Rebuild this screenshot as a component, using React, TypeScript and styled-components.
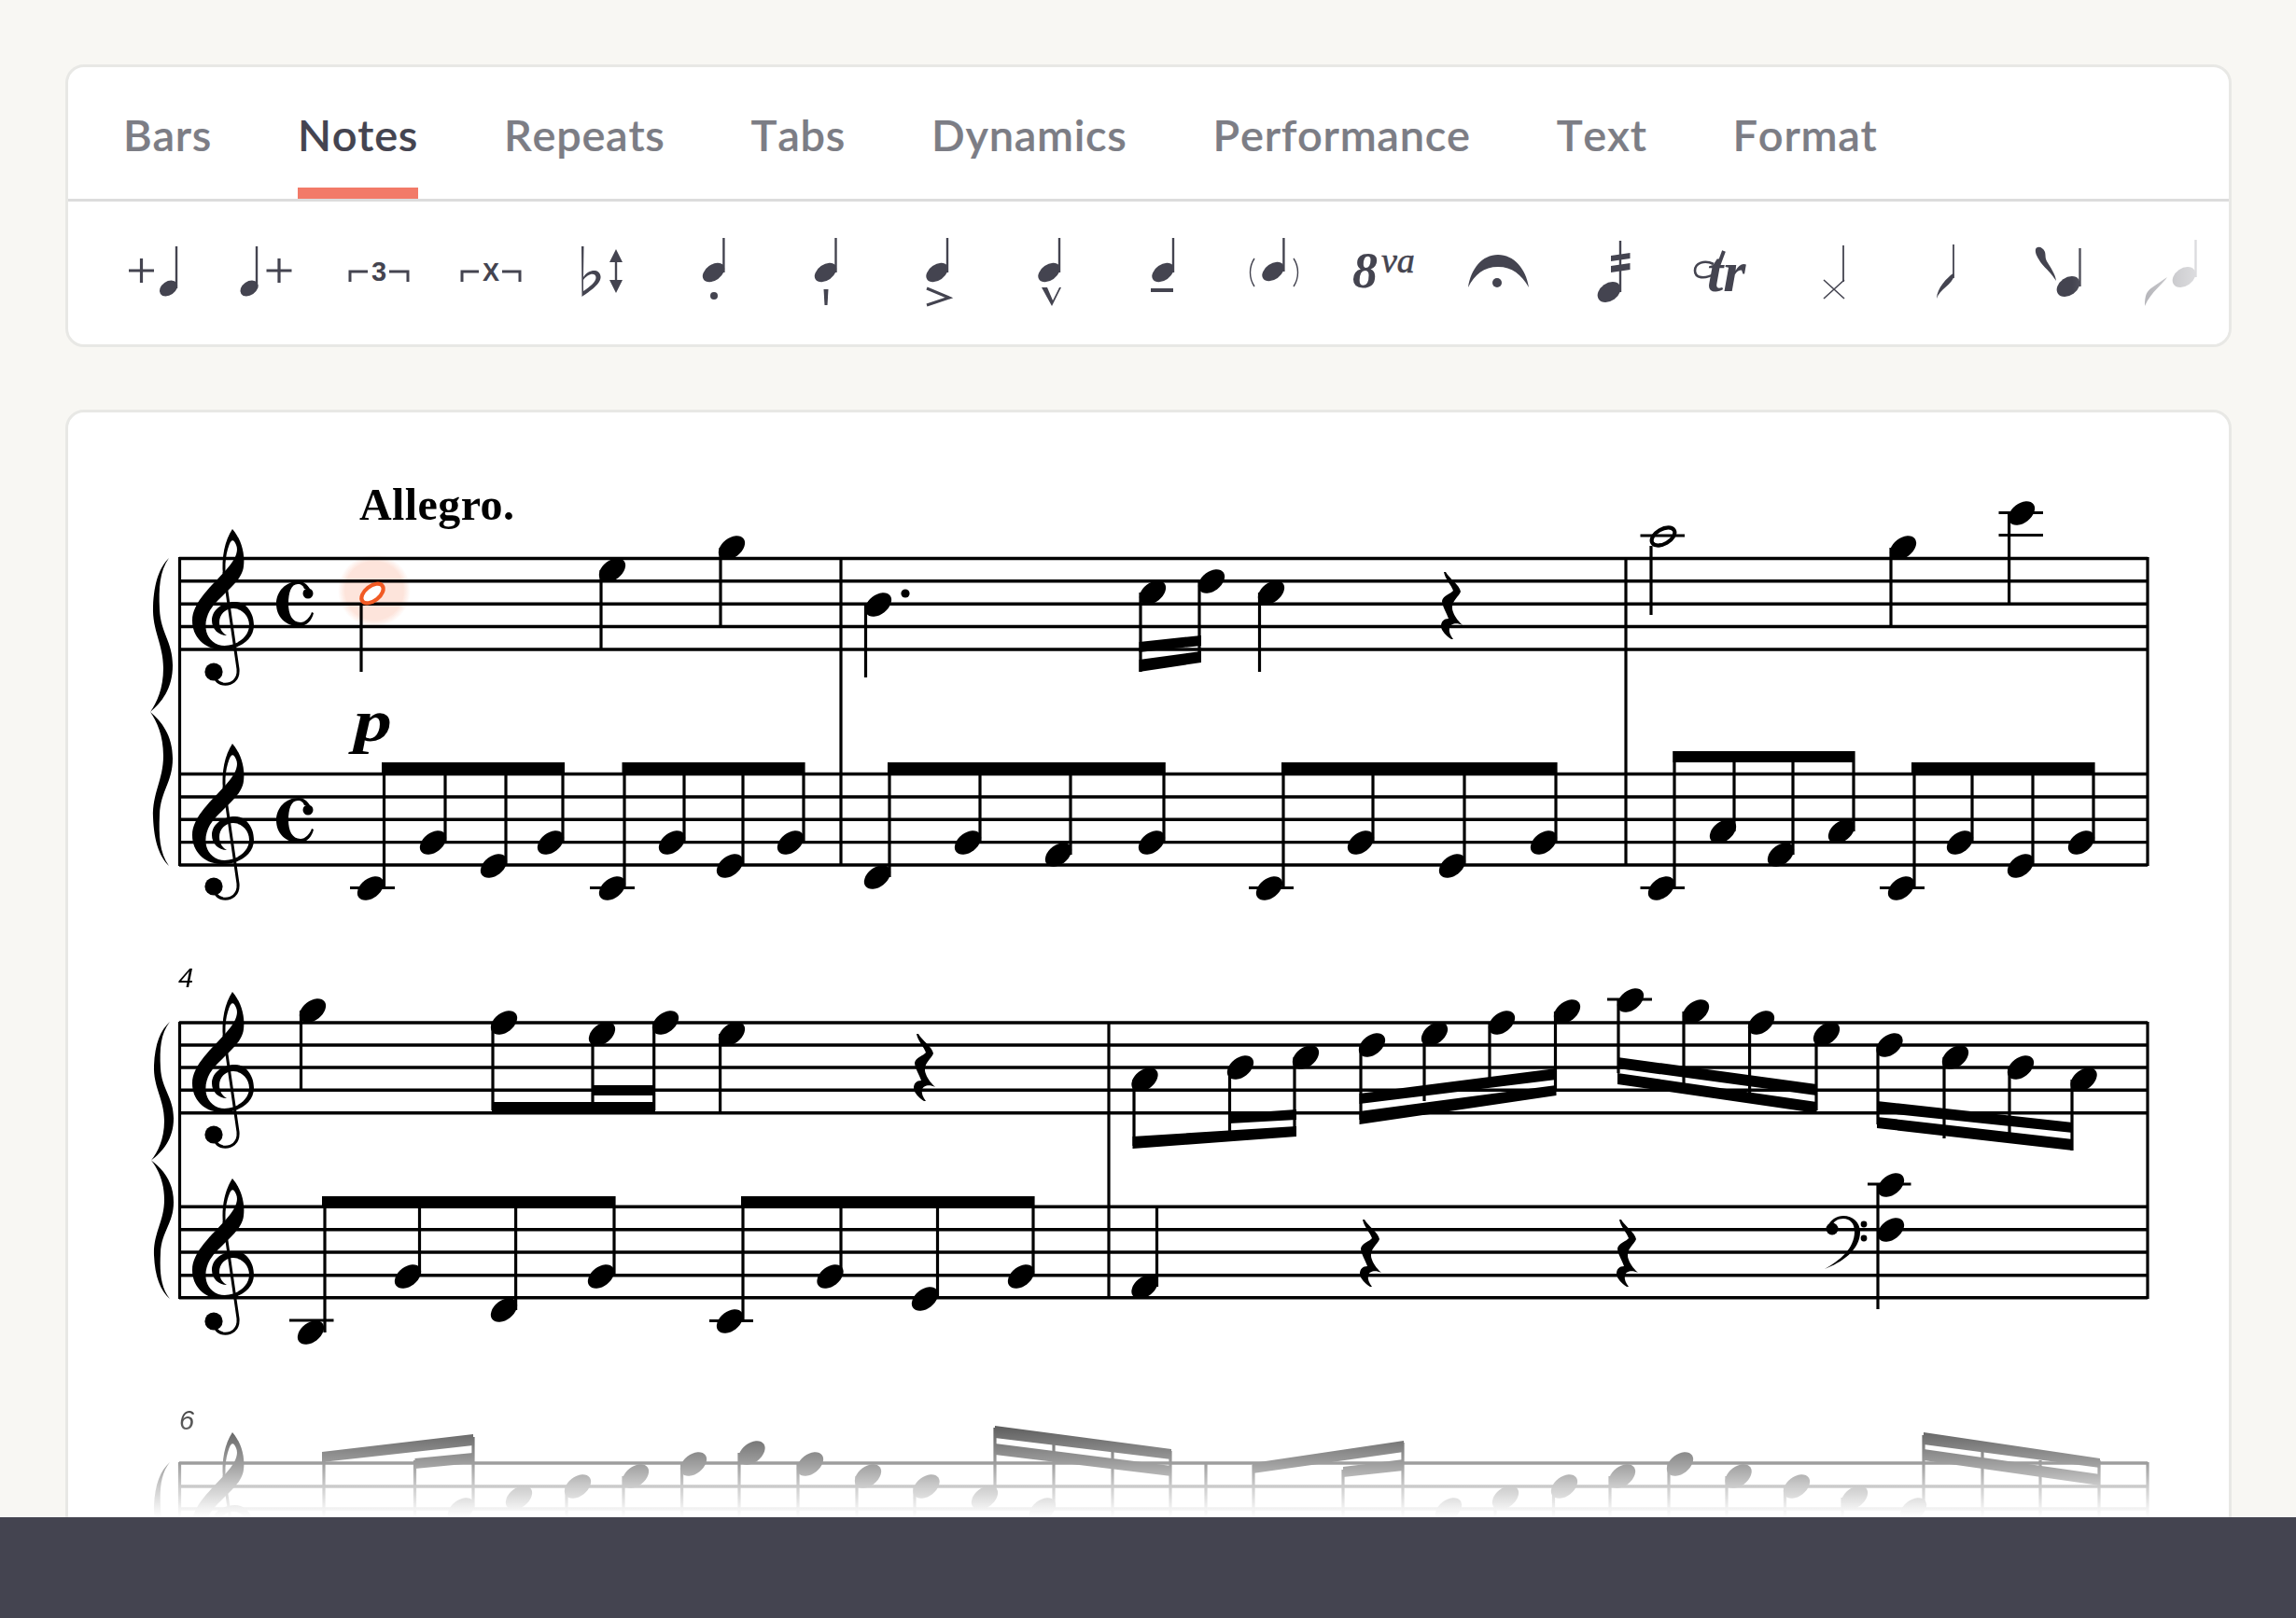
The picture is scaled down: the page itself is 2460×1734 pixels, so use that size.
import React from "react";
import styled, { createGlobalStyle } from "styled-components";

const INK = "#444450";

const GlobalStyle = createGlobalStyle`
  html, body { margin: 0; padding: 0; background: #f8f7f3; }
  body { font-family: "Lato", "Liberation Sans", sans-serif; }
`;

const Page = styled.div`
  width: 2460px;
  height: 1734px;
  display: flex;
  flex-direction: column;
  overflow: hidden;
  background: #f8f7f3;
`;

const Main = styled.main`
  flex: 1;
  min-height: 0;
  padding: 69px 69px 0 70px;
  display: flex;
  flex-direction: column;
  gap: 67px;
  overflow: hidden;
`;

const Card = styled.section`
  background: #fff;
  border: 3px solid #e8e8e5;
  border-radius: 20px;
  flex: none;
`;

const TabBar = styled.nav`
  height: 141px;
  display: flex;
  gap: 92px;
  padding-left: 59px;
  border-bottom: 3px solid #dcdcdc;
`;

const Tab = styled.div<{ $active?: boolean }>`
  position: relative;
  font-size: 47px;
  font-weight: 600;
  line-height: 145px;
  letter-spacing: 0.7px;
  font-kerning: none;
  -webkit-text-stroke: 0.2px currentColor;
  color: ${(p) => (p.$active ? INK : "#7c7d85")};
  &::after {
    content: "";
    display: ${(p) => (p.$active ? "block" : "none")};
    position: absolute;
    left: 0;
    right: 0;
    bottom: 0;
    height: 12px;
    background: #f27a68;
  }
`;

const ToolBar = styled.div`
  position: relative;
  height: 153px;
  display: flex;
  padding-left: 32px;
  overflow: hidden;
  border-radius: 0 0 18px 18px;
`;

const ToolIcon = styled.svg`
  flex: none;
  width: 120px;
  height: 153px;
  display: block;
`;

const ToolFade = styled.div`
  position: absolute;
  top: 0;
  right: 0;
  bottom: 0;
  width: 168px;
  background: linear-gradient(
    to right,
    rgba(255, 255, 255, 0) 0%,
    rgba(255, 255, 255, 0.6) 45%,
    rgba(255, 255, 255, 0.95) 100%
  );
`;

const ScoreCard = styled(Card)`
  position: relative;
  flex: 1;
  min-height: 0;
  margin-bottom: -40px;
  overflow: hidden;
`;

const ScoreSheet = styled.svg`
  display: block;
  width: 2315px;
  height: 1184px;
  filter: blur(0.45px);
`;

const ScoreFade = styled.div`
  position: absolute;
  left: 0;
  right: 0;
  bottom: 37px;
  height: 156px;
  background: linear-gradient(
    to bottom,
    rgba(255, 255, 255, 0) 0%,
    rgba(255, 255, 255, 0.62) 63%,
    rgba(255, 255, 255, 0.8) 79%,
    rgba(255, 255, 255, 0.95) 94%,
    rgba(255, 255, 255, 1) 100%
  );
`;

const Footer = styled.footer`
  flex: none;
  position: relative;
  height: 108px;
  background: ${INK};
`;

/* ---------- engraving shapes ---------- */

const SERIF = '"Liberation Serif", serif';
const SANS = '"Liberation Sans", sans-serif';

type Pt = [number, number];
type StemLine = [number, number, number];
type BeamQuad = [number, number, number, number, number, number];
type Ledger = [number, number, number];

const Head = ({ x, y }: { x: number; y: number }) => (
  <ellipse cx={x} cy={y} rx={16} ry={10.4} transform={`rotate(-38 ${x} ${y})`} />
);

const Clef = ({ x, y }: { x: number; y: number }) => (
  <g transform={`translate(${x} ${y})`}>
    <path d="M43 0C51 9 57 24 55 40C53 58 30 70 19 87C11 101 13 118 28 124C42 128 61 118 61 103C61 92 52 85 44 85C35 85 29 92 29 100C29 107 33 112 37 114C28 114 21 107 21 98C21 86 33 78 46 78C58 78 66 90 66 103C66 120 48 130 30 129C12 128 0 115 0 98C0 78 22 60 36 44C46 33 50 24 47 17C45 12 43 11 41 14Z" />
    <path d="M43 0C35 12 31 30 33 50L36 50C34 32 38 18 43 10Z" />
    <path d="M34 46L49 150C50 162 42 167 33 166C27 165 23 160 24 155" fill="none" stroke="#000" strokeWidth={3} />
    <circle cx={23} cy={153} r={9.6} />
  </g>
);

const CommonTime = ({ x, y }: { x: number; y: number }) => (
  <g transform={`translate(${x} ${y})`}>
    <path d="M24 0C10 0 0 11 0 24C0 38 10 48 24 48C33 48 38 42 40 34L38 33C36 39 31 44 26 44C17 44 13 35 13 24C13 12 16 3 23 3C27 3 29 5 30 8L36 8C33 3 29 0 24 0Z" />
    <circle cx={34} cy={13} r={5.5} />
  </g>
);

const QuarterRest = ({ x, y }: { x: number; y: number }) => (
  <path
    transform={`translate(${x} ${y})`}
    d="M3 0L5 0C9 7 20 14 21 21C19 27 9 32 13 43C15 49 20 54 23 57C17 54 10 55 9 60C8 64 10 68 13 72L11 72C6 69 0 63 0 58C0 53 3 50 8 50C6 44 1 36 1 31C2 25 11 23 13 20C11 14 4 7 3 0Z"
  />
);

const BRACE_HALF = "M20 0C10 14 9 32 10 55C11 80 24 90 24 115C24 140 12 155 0 165C7 155 14 140 14 118C14 92 2 78 3 52C4 26 10 10 20 0Z";

const Brace = ({ x, y, height }: { x: number; y: number; height: number }) => {
  const s = height / 330;
  return (
    <g transform={`translate(${x} ${y}) scale(1 ${s})`}>
      <path d={BRACE_HALF} />
      <path d={BRACE_HALF} transform="translate(0 330) scale(1 -1)" />
    </g>
  );
};

const Staff = ({ lines, x1, x2 }: { lines: number[]; x1: number; x2: number }) => (
  <g stroke="#000" strokeWidth={3.4}>
    {lines.map((y) => (
      <line key={y} x1={x1} x2={x2} y1={y} y2={y} />
    ))}
  </g>
);

const Stems = ({ items }: { items: StemLine[] }) => (
  <g stroke="#000" strokeWidth={3.2}>
    {items.map(([x, y1, y2], i) => (
      <line key={i} x1={x} x2={x} y1={y1} y2={y2} />
    ))}
  </g>
);

const Beams = ({ items }: { items: BeamQuad[] }) => (
  <g>
    {items.map(([x1, t1, b1, x2, t2, b2], i) => (
      <polygon key={i} points={`${x1},${t1} ${x2},${t2} ${x2},${b2} ${x1},${b1}`} />
    ))}
  </g>
);

const Ledgers = ({ items }: { items: Ledger[] }) => (
  <g stroke="#000" strokeWidth={3.2}>
    {items.map(([x1, x2, y], i) => (
      <line key={i} x1={x1} x2={x2} y1={y} y2={y} />
    ))}
  </g>
);

const Heads = ({ items }: { items: Pt[] }) => (
  <g>
    {items.map(([x, y], i) => (
      <Head key={i} x={x} y={y} />
    ))}
  </g>
);

/* ---------- score data (page pixels) ---------- */

const S1_TOP = [598.5, 622.8, 647.2, 671.5, 696];
const S1_LOW = [829.5, 854, 878.3, 902.6, 927];
const S2_TOP = [1096, 1120, 1144, 1168.3, 1192.7];
const S2_LOW = [1293.3, 1317.7, 1342, 1366.7, 1390.7];
const S3_TOP = [1568, 1593, 1617, 1641];

const S1_HEADS: Pt[] = [
  [656, 611], [784, 587], [941, 648], [1235, 635], [1298, 623], [1362, 635], [2039, 587], [2166, 550],
  [397, 952], [464, 903], [529, 928], [590, 903], [656, 952], [720, 903], [782, 928], [847, 903],
  [940, 940], [1037, 903], [1134, 916], [1234, 903], [1360, 952], [1458, 903], [1556, 928], [1654, 903],
  [1780, 952], [1846, 891], [1908, 916], [1973, 891], [2037, 952], [2100, 903], [2165, 928], [2230, 903],
];

const S1_STEMS: StemLine[] = [
  [387, 647, 720], [644, 611, 696], [772, 587, 671], [927.5, 648, 726], [1222, 635, 720], [1285, 623, 710],
  [1349.5, 635, 720], [1769, 585, 659], [2026, 587, 671], [2152.6, 550, 647],
  [411.5, 817, 952], [477, 817, 903], [542, 817, 928], [603, 817, 903],
  [669, 817, 952], [733, 817, 903], [796, 817, 928], [861, 817, 903],
  [953, 817, 940], [1050, 817, 903], [1147, 817, 916], [1247, 817, 903],
  [1375, 817, 952], [1471, 817, 903], [1569, 817, 928], [1667, 817, 903],
  [1794, 805, 952], [1858, 805, 891], [1921, 805, 916], [1986, 805, 891],
  [2051, 817, 952], [2113, 817, 903], [2178, 817, 928], [2243, 817, 903],
];

const S1_BEAMS: BeamQuad[] = [
  [1220.5, 688, 699, 1287, 681, 692],
  [1220.5, 707, 720, 1287, 698, 710],
  [409, 817, 830, 605, 817, 830],
  [666.5, 817, 830, 862, 817, 830],
  [951, 817, 830, 1248.5, 817, 830],
  [1373, 817, 830, 1668, 817, 830],
  [1792.5, 805, 817, 1987, 805, 817],
  [2048, 817, 830, 2244, 817, 830],
];

const S1_LEDGERS: Ledger[] = [
  [1757.5, 1805, 574], [2141.5, 2189, 549.5], [2141.5, 2189, 573.5],
  [375, 423, 951.5], [632, 680, 951.5], [1338, 1386, 951.5], [1757.5, 1805, 951.5], [2014, 2062, 951.5],
];

const S2_HEADS: Pt[] = [
  [335, 1083], [540, 1096], [645, 1108], [713, 1096], [784, 1108],
  [333, 1428], [437, 1368], [540, 1404], [644, 1368], [782, 1416], [889.5, 1368], [991, 1392], [1094, 1368],
  [1226.5, 1157], [1329, 1144], [1399, 1133],
  [1470, 1120], [1537, 1108], [1609, 1096], [1679, 1084],
  [1747, 1072], [1817, 1084], [1887, 1096], [1957, 1108],
  [2024.5, 1120], [2095, 1133], [2165, 1144], [2232.6, 1157],
  [1226.5, 1379], [2026, 1270], [2026, 1318],
];

const S2_STEMS: StemLine[] = [
  [322.5, 1083, 1168], [528, 1096, 1190], [635, 1108, 1190], [700.7, 1096, 1190], [771.6, 1108, 1192],
  [348, 1282, 1428], [449.5, 1282, 1368], [552.6, 1282, 1404], [658, 1282, 1368],
  [796, 1282, 1416], [901, 1282, 1368], [1004.5, 1282, 1392], [1107, 1282, 1368],
  [1215, 1157, 1228], [1317.5, 1144, 1214], [1387, 1133, 1210],
  [1458, 1120, 1200], [1526, 1108, 1180], [1596, 1096, 1165], [1666.5, 1084, 1170],
  [1734, 1072, 1150], [1804, 1084, 1165], [1874.6, 1096, 1180], [1946, 1108, 1190],
  [2012, 1120, 1205], [2083, 1133, 1220], [2153, 1144, 1225], [2220, 1157, 1233],
  [1239.5, 1293, 1379], [2012, 1270, 1403],
];

const S2_BEAMS: BeamQuad[] = [
  [527, 1181, 1193, 702, 1181, 1193],
  [635, 1163, 1174, 702, 1163, 1174],
  [345, 1282, 1293, 659, 1282, 1293],
  [794, 1282, 1293, 1108, 1282, 1293],
  [1213.5, 1218, 1231, 1389, 1207, 1218],
  [1317, 1194, 1204, 1389, 1189, 1200],
  [1456.5, 1172, 1183, 1667.5, 1145, 1157],
  [1456.5, 1191, 1205, 1667.5, 1163, 1174],
  [1733, 1133, 1145, 1946.5, 1162, 1174],
  [1733, 1150, 1162, 1946.5, 1181, 1193],
  [2011, 1180, 1192, 2221, 1203, 1214],
  [2011, 1197, 1209, 2221, 1221, 1233],
];

const S2_LEDGERS: Ledger[] = [
  [310, 357.5, 1415], [760, 807, 1415.5], [1722, 1770, 1071], [2001, 2047.5, 1269],
];

const S3_HEADS: Pt[] = [
  [432, 1640], [494, 1618], [556, 1605], [619, 1593], [681, 1582], [743, 1569], [805.5, 1557], [868, 1569],
  [930, 1582], [992.5, 1593], [1055, 1605], [1117, 1618],
  [1552, 1618], [1613, 1605], [1676, 1593], [1738, 1582], [1800, 1569], [1862.6, 1582], [1925, 1593], [1987, 1605], [2050, 1618],
];

const S3_STEMS: StemLine[] = [
  [347, 1560, 1640], [444.5, 1565, 1640], [507, 1540, 1618],
  [607, 1593, 1640], [668, 1582, 1640], [730.6, 1569, 1640], [792, 1557, 1640], [855, 1569, 1640], [918, 1582, 1640], [980, 1593, 1640],
  [1066, 1530, 1605], [1129, 1545, 1618], [1192, 1550, 1640], [1254, 1555, 1640],
  [1343, 1570, 1640], [1439, 1575, 1640], [1503, 1546, 1640],
  [1602, 1605, 1640], [1664.5, 1593, 1640], [1725, 1582, 1640], [1788, 1569, 1640], [1850, 1582, 1640], [1912.5, 1593, 1640], [1974, 1605, 1640],
  [2061, 1538, 1618], [2124, 1555, 1640], [2186, 1565, 1640], [2249, 1565, 1640],
];

const S3_BEAMS: BeamQuad[] = [
  [345, 1556, 1567, 507, 1537, 1549],
  [444.5, 1563, 1574, 507, 1557, 1568],
  [1066, 1528, 1541, 1255, 1553, 1564],
  [1066, 1547, 1559, 1255, 1571, 1582],
  [1342, 1568, 1579, 1504, 1544, 1556],
  [1439, 1572, 1583, 1504, 1564, 1576],
  [2061, 1535, 1548, 2250, 1563, 1573],
  [2061, 1553, 1565, 2250, 1580, 1592],
];

const ScoreDrawing = () => (
  <ScoreSheet viewBox="73 442 2315 1184" fill="#000">
    <defs>
      <radialGradient id="noteGlow">
        <stop offset="0.8" stopColor="#fde4db" />
        <stop offset="1" stopColor="#fde4db" stopOpacity={0} />
      </radialGradient>
    </defs>
    <circle cx={401} cy={633} r={39} fill="url(#noteGlow)" />

    {/* system one */}
    <Staff lines={S1_TOP} x1={192} x2={2301} />
    <Staff lines={S1_LOW} x1={192} x2={2301} />
    <Stems items={[[192.5, 597, 928], [901, 597, 928], [1742, 597, 928], [2301, 597, 928]]} />
    <Brace x={161} y={598} height={330} />
    <Clef x={206} y={567} />
    <Clef x={206} y={797} />
    <CommonTime x={296} y={623} />
    <CommonTime x={296} y={855} />
    <text x={385} y={557} fontFamily={SERIF} fontWeight={700} fontSize={48} letterSpacing={0.4}>Allegro.</text>
    <text transform="translate(379 794) scale(1.3 1)" fontFamily={SERIF} fontWeight={700} fontStyle="italic" fontSize={63}>p</text>
    <ellipse cx={399} cy={636} rx={13.5} ry={7.8} transform="rotate(-38 399 636)" fill="#fff" stroke="#f15a24" strokeWidth={4.2} />
    <Stems items={S1_STEMS} />
    <Beams items={S1_BEAMS} />
    <Ledgers items={S1_LEDGERS} />
    <Heads items={S1_HEADS} />
    <ellipse cx={1782} cy={575} rx={13.5} ry={7.8} transform="rotate(-30 1782 575)" fill="none" stroke="#000" strokeWidth={4.2} />
    <circle cx={970} cy={636} r={4.6} />
    <QuarterRest x={1544} y={613} />

    {/* system two */}
    <text x={191} y={1058} fontFamily={SANS} fontStyle="italic" fontSize={29}>4</text>
    <Staff lines={S2_TOP} x1={192} x2={2301} />
    <Staff lines={S2_LOW} x1={192} x2={2301} />
    <Stems items={[[192.5, 1095, 1392], [1188, 1095, 1392], [2301, 1095, 1392]]} />
    <Brace x={162} y={1095} height={297} />
    <Clef x={206} y={1063} />
    <Clef x={206} y={1263} />
    <Stems items={S2_STEMS} />
    <Beams items={S2_BEAMS} />
    <Ledgers items={S2_LEDGERS} />
    <Heads items={S2_HEADS} />
    <QuarterRest x={979} y={1108} />
    <QuarterRest x={1457} y={1307} />
    <QuarterRest x={1732} y={1307} />
    <g transform="translate(1955 1303)">
      <path d="M0 57C16 48 32 35 32 17C32 8 27 3 20 3C14 3 10 6 9 9L3 12C6 4 13 0 20 0C30 0 38 7 38 17C38 37 18 50 0 57Z" />
      <circle cx={8} cy={14} r={6.5} />
      <circle cx={42} cy={9} r={3.4} />
      <circle cx={42} cy={24} r={3.4} />
    </g>

    {/* system three, fades out under the footer */}
    <text x={192} y={1532} fontFamily={SANS} fontStyle="italic" fontSize={29}>6</text>
    <Staff lines={S3_TOP} x1={192} x2={2301} />
    <Stems items={[[192.5, 1567, 1650], [1292, 1567, 1650], [2301, 1567, 1650]]} />
    <Brace x={162} y={1567} height={297} />
    <Clef x={206} y={1535} />
    <Stems items={S3_STEMS} />
    <Beams items={S3_BEAMS} />
    <Heads items={S3_HEADS} />
  </ScoreSheet>
);

/* ---------- toolbar icons (drawn in page pixels, one 120px slot each) ---------- */

const IconNote = ({ x, y, stem, top = 255, w = 13, h = 8.4 }: { x: number; y: number; stem: number; top?: number; w?: number; h?: number }) => (
  <g>
    <ellipse cx={x} cy={y} rx={w} ry={h} transform={`rotate(-35 ${x} ${y})`} />
    <line x1={stem} x2={stem} y1={top} y2={y} stroke={INK} strokeWidth={2.4} />
  </g>
);

const Plus = ({ x, y }: { x: number; y: number }) => (
  <path d={`M${x - 13.5} ${y}H${x + 13.5}M${x} ${y - 13}V${y + 13}`} stroke={INK} strokeWidth={3.2} fill="none" />
);

const TupletBracket = ({ x1, x2, y, left }: { x1: number; x2: number; y: number; left: boolean }) => (
  <path
    d={left ? `M${x1} 302V${y}H${x2}` : `M${x1} ${y}H${x2}V302`}
    stroke={INK}
    strokeWidth={3}
    fill="none"
  />
);

const TOOL_ICONS: React.ReactNode[] = [
  <>
    <Plus x={151.5} y={290} />
    <IconNote x={180.5} y={309} stem={189} top={264} w={10.5} h={7.4} />
  </>,
  <>
    <IconNote x={267} y={309} stem={275} top={264} w={10.5} h={7.4} />
    <Plus x={299} y={290} />
  </>,
  <>
    <TupletBracket x1={375} x2={394} y={291} left />
    <text x={406} y={301} textAnchor="middle" fontFamily={SANS} fontWeight={700} fontSize={29}>3</text>
    <TupletBracket x1={417} x2={437} y={291} left={false} />
  </>,
  <>
    <TupletBracket x1={495} x2={513} y={291} left />
    <text x={526} y={301} textAnchor="middle" fontFamily={SANS} fontWeight={700} fontSize={27}>X</text>
    <TupletBracket x1={538} x2={557} y={291} left={false} />
  </>,
  <>
    <path d="M623 264L625.5 264L625 297C630 289 642 287 643.5 296C644.5 304 632 312 623.5 318ZM625 300L625 312C631 308 639 302 638.5 297C637.5 291 629 294 625 300Z" fillRule="evenodd" />
    <path d="M660 267L667 281H661.2V300H667L660 314L653 300H658.8V281H653Z" />
  </>,
  <>
    <IconNote x={764.5} y={292} stem={775.4} />
    <circle cx={765} cy={317} r={4} />
  </>,
  <>
    <IconNote x={884.5} y={292} stem={895.5} />
    <polygon points="882.5,310 887.5,310 886.5,327 883.5,327" />
  </>,
  <>
    <IconNote x={1004} y={292} stem={1015} />
    <path d="M993 309L1017 319L993 327" fill="none" stroke={INK} strokeWidth={3} />
  </>,
  <>
    <IconNote x={1124} y={292} stem={1135} />
    <path d="M1116 308L1122 308L1128 322L1135 308L1137 308L1127 328Z" />
  </>,
  <>
    <IconNote x={1246} y={292} stem={1257} />
    <rect x={1233} y={309} width={24} height={4} />
  </>,
  <>
    <IconNote x={1364} y={291} stem={1375.4} />
    <path d="M1344 277C1338 286 1338 298 1344 307M1386 277C1392 286 1392 298 1386 307" fill="none" stroke={INK} strokeWidth={1.4} />
  </>,
  <>
    <text x={1449} y={308} fontFamily={SERIF} fontWeight={700} fontStyle="italic" fontSize={54}>8</text>
    <text x={1480} y={292} fontFamily={SERIF} fontStyle="italic" fontSize={38} stroke={INK} strokeWidth={0.6}>va</text>
  </>,
  <>
    <path d="M1573 308C1576 288 1588 273 1605 273C1622 273 1635 288 1638 308C1630 294 1620 286 1605 286C1590 286 1580 294 1573 308Z" />
    <circle cx={1604} cy={303} r={5} />
  </>,
  <>
    <IconNote x={1724} y={313} stem={1736} top={258} w={13.5} h={9.6} />
    <polygon points="1726,274 1746.5,271 1746.5,277 1726,280" />
    <polygon points="1726,285 1746.5,282 1746.5,289 1726,292" />
  </>,
  <>
    <path d="M1847 269L1841 285" fill="none" stroke={INK} strokeWidth={4} />
    <path d="M1836 283C1826 278 1816 282 1816 290C1816 298 1826 300 1838 293" fill="none" stroke={INK} strokeWidth={2.6} />
    <text x={1829} y={312} fontFamily={SERIF} fontWeight={700} fontStyle="italic" fontSize={62}>tr</text>
  </>,
  <>
    <line x1={1975} x2={1975} y1={263} y2={302} stroke={INK} strokeWidth={1.8} />
    <path d="M1954 300L1976 320M1976 300L1954 320" stroke={INK} strokeWidth={1.6} fill="none" />
  </>,
  <>
    <line x1={2093} x2={2093} y1={262} y2={298} stroke={INK} strokeWidth={1.8} />
    <path d="M2093.8 295C2092 305 2078 310 2075 320C2075.5 308 2086 298 2092.5 293Z" />
  </>,
  <>
    <IconNote x={2216} y={307} stem={2228.5} top={266} w={13.5} h={9.6} />
    <path d="M2181 267C2183 263 2189 265 2191 270C2192 274 2191 276 2193 280C2197 287 2202 293 2203 301C2198 293 2192 288 2187 282C2184 277 2180 272 2181 267Z" />
  </>,
  <>
    <IconNote x={2340} y={297} stem={2352.5} top={257} w={13.5} h={9.6} />
    <path d="M2322 297C2318 304 2305 312 2298 328C2298 316 2300 312 2306 308C2312 304 2317 300 2322 297Z" />
  </>,
];

const TABS = ["Bars", "Notes", "Repeats", "Tabs", "Dynamics", "Performance", "Text", "Format"];

const App: React.FC = () => {
  return (
    <Page>
      <GlobalStyle />
      <Main>
        <Card>
          <TabBar>
            {TABS.map((t) => (
              <Tab key={t} $active={t === "Notes"}>
                {t}
              </Tab>
            ))}
          </TabBar>
          <ToolBar>
            {TOOL_ICONS.map((icon, i) => (
              <ToolIcon key={i} viewBox={`${105 + 120 * i} 216 120 153`} fill={INK}>
                {icon}
              </ToolIcon>
            ))}
            <ToolFade />
          </ToolBar>
        </Card>
        <ScoreCard>
          <ScoreDrawing />
          <ScoreFade />
        </ScoreCard>
      </Main>
      <Footer />
    </Page>
  );
};

export default App;
